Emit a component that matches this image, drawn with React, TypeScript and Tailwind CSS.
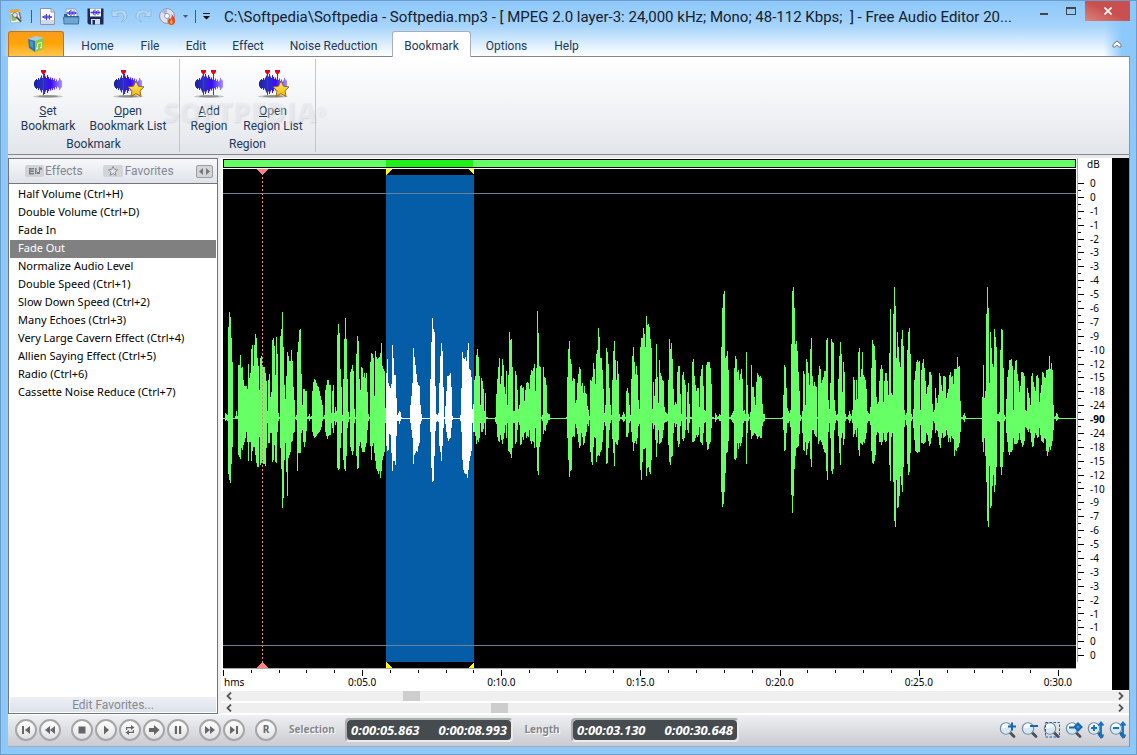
import React from 'react';
import clsx from 'clsx';

interface WaveSegment {
  x: number;
  // alternating amplitude above / below the zero line, one pair per column
  amp: number[];
}

const WIDTH = 853;
const HEIGHT = 499;
const ZERO = 249;
const DURATION = 30.648;
const SEL_START = 163;
const SEL_END = 251;

const WAVE: WaveSegment[] = [
  { x: 2, amp: [5,3, 4,2, 3,3, 91,56, 106,62, 101,65, 80,46, 56,29] },
  { x: 12, amp: [2,1, 7,1, 2,1, 53,37, 53,39, 63,41, 50,30, 51,32, 38,27, 32,24, 32,20, 32,14, 29,24, 54,43, 40,24, 45,24, 69,43, 73,33, 52,29, 73,29, 84,37, 80,45, 60,49, 52,49, 28,19, 60,47, 62,45, 51,42, 51,46, 51,46, 45,48, 37,30, 7,5, 38,25, 44,25, 21,15, 26,15, 78,44, 80,42, 72,27, 43,44, 81,45, 64,14, 5,3, 1,1, 82,30, 89,51, 106,90, 71,80, 33,42, 19,25, 42,54, 66,78, 62,40, 57,37, 57,34, 68,24, 57,23, 31,15, 18,14, 1,1, 3,2, 66,53, 76,35, 88,35, 89,35, 44,15, 13,12, 29,24, 29,29, 27,24, 27,13] },
  { x: 84, amp: [1,1, 2,1, 4,3, 1,1, 2,1, 27,14, 36,18, 39,20, 38,19, 35,18, 32,16, 31,15, 27,14, 22,12, 18,9, 13,3, 1,1] },
  { x: 101, amp: [3,1, 28,14, 33,18, 38,21, 38,18, 33,17, 33,17, 5,5, 27,10, 33,15, 5,3, 11,7, 7,4, 83,50, 94,52, 85,51, 49,30, 31,15, 3,3, 39,42, 79,51, 100,53, 79,38, 39,10, 6,4, 1,1, 46,29, 49,33, 53,37, 47,33, 9,5, 1,1, 64,38, 82,51, 77,50, 39,28, 28,24, 51,30, 50,34, 41,34, 45,34, 40,29, 45,25, 26,12, 4,3, 1,1, 56,28, 65,42, 64,28, 60,25, 22,35, 67,43, 61,51, 59,53, 60,56, 61,53, 65,60, 75,53, 52,42, 49,38, 47,34, 10,5] },
  { x: 163, amp: [45,28, 59,33, 35,32, 32,16, 30,17, 34,35, 73,53, 60,43, 43,43, 43,47, 20,18, 3,3, 5,3, 7,6, 6,3, 1,1] },
  { x: 187, amp: [13,5, 22,12, 35,20, 70,46, 61,37, 53,35, 44,33, 36,34, 33,28, 32,25, 13,6, 4,3] },
  { x: 207, amp: [39,14, 76,50, 100,64, 89,63, 86,38, 32,13, 4,4, 3,3, 5,4, 35,28, 62,34, 75,43, 67,28, 31,10, 1,1, 12,6, 27,14, 42,20, 42,23, 43,21, 45,20, 31,10, 2,2] },
  { x: 237, amp: [3,3, 30,14, 66,42, 60,52, 59,55, 61,56, 57,56, 68,60, 75,52, 49,43, 48,38, 41,33, 9,5, 14,14, 38,14, 42,18, 63,26, 69,22, 61,24, 42,20, 13,5, 40,14, 37,14, 29,11, 7,5, 25,17, 1,1, 1,1] },
  { x: 272, amp: [1,4, 24,6, 39,19, 51,23, 60,24, 34,17, 42,22, 59,26, 53,21, 31,15, 24,7, 47,20, 13,5, 43,33, 86,34, 78,36, 79,40, 51,30, 7,5, 7,5, 47,26, 43,24, 28,12, 9,4, 13,7, 32,27, 33,26, 30,19, 31,22, 17,15, 28,14, 35,20, 36,18, 35,19, 29,12, 43,23, 48,26, 47,23, 50,24, 54,30, 27,10, 50,29, 107,53, 85,57, 52,29, 51,24, 1,1, 3,3, 51,16, 41,12, 40,13, 33,7, 5,5, 4,2, 4,2] },
  { x: 343, amp: [1,1, 41,20, 69,42, 77,59, 59,53, 54,52, 37,19, 40,18, 39,19, 15,6, 18,10, 35,16, 44,24, 51,30, 49,28, 32,15, 35,19, 25,27, 32,25, 25,18, 24,14, 12,6, 8,8, 2,2, 38,34, 37,44, 41,47, 55,29, 49,19, 34,20, 64,44, 68,38, 90,37, 81,38, 60,34, 60,32, 48,24, 29,12, 5,4, 13,8, 70,46, 66,45, 54,30, 30,12, 13,5, 3,2, 38,21, 67,35, 77,48, 58,24, 38,26, 57,27, 44,22, 4,3, 1,1, 1,1, 3,2, 6,4, 4,3, 1,1, 27,19, 30,19, 25,15, 13,5, 3,3, 39,14, 62,24, 71,33, 56,25, 44,23, 52,26, 43,20, 18,8, 9,6, 71,52, 80,62, 80,44, 90,31, 84,31, 71,30, 102,58, 93,50, 94,49, 91,54, 79,56, 70,42, 9,5, 36,11, 22,7, 39,22, 74,39, 41,25, 15,12, 58,26, 45,25, 42,24, 38,20, 37,12, 11,5, 6,4, 5,4, 4,3, 38,27, 79,44, 69,47, 75,39, 59,38, 29,15, 13,5, 16,9, 14,6, 46,23, 52,29, 52,26, 24,8, 4,3, 43,21, 46,23, 38,20, 33,12, 1,1, 26,12, 35,15, 14,5, 1,1, 1,1, 56,24, 59,24, 42,23, 33,20, 27,17, 30,19, 30,17, 11,9, 42,24, 49,25, 53,27, 32,15, 8,5, 7,4, 53,24, 56,32, 56,31, 56,26, 50,24, 34,10, 1,1, 1,1] },
  { x: 492, amp: [5,4, 3,2, 1,1, 2,1, 4,3, 3,3, 71,74, 110,89, 124,86, 127,74, 60,55, 62,35, 67,34, 48,23, 1,1, 1,1, 3,2, 5,4, 7,5, 50,41, 62,42, 59,40, 46,25, 48,31, 38,25, 44,28, 49,25, 39,19, 7,5, 8,3, 4,3, 66,46, 33,15, 4,3, 1,1, 6,12, 53,21, 31,18, 31,17, 21,15, 13,16, 36,18, 45,21, 43,19, 41,18, 42,20, 40,20, 14,8, 4,4, 4,3] },
  { x: 559, amp: [1,1, 23,12, 53,33, 51,32, 30,15, 10,5, 7,5, 5,3, 8,9, 74,77, 127,95, 131,78, 110,51, 74,38, 77,30, 67,29, 46,28, 27,16, 3,3, 1,1, 7,15, 47,32, 44,33, 13,24, 59,37, 56,31, 45,25, 33,23, 69,41, 80,49, 42,12, 32,12, 36,16, 32,18, 31,19, 1,1, 43,26, 52,23, 49,22, 35,24, 38,27, 41,31, 47,34, 47,35, 78,53, 80,62, 18,14, 9,5, 35,20, 79,53, 76,56, 75,51, 18,12, 7,5, 3,2, 4,3, 39,18, 62,35, 76,47, 64,20, 26,15, 56,27, 46,21, 4,3, 1,1, 1,1, 3,2, 7,5, 4,3, 2,1, 8,5, 41,19, 38,16, 18,12, 38,19, 19,10, 66,32, 70,38, 41,25, 49,26, 66,27, 43,24, 41,25, 38,21, 29,15, 7,5, 5,3, 4,3, 11,7, 50,33, 78,45, 74,46, 72,43, 58,37, 21,17, 14,14, 16,15, 37,24, 49,24, 53,27, 49,24, 16,15, 37,22, 45,24, 45,23, 37,15, 23,14, 65,47, 109,63, 25,19, 23,15, 104,64, 131,103, 112,109, 60,62, 86,90, 71,89, 56,78, 51,58, 79,67, 88,74, 72,49, 8,9, 3,2, 5,7, 68,46, 86,57, 90,54, 64,35, 4,3, 1,1, 9,10, 38,22, 47,33, 56,34, 58,35, 56,34, 57,34, 8,7, 48,25, 55,25, 59,26, 50,25, 37,24, 24,15, 31,17, 33,23, 46,28, 46,26, 43,20, 14,12, 6,3, 8,5, 30,15, 20,12, 15,13, 23,19, 45,27, 42,30, 33,20, 27,15, 42,20, 42,19, 41,18, 20,12, 25,17, 29,24, 43,20, 46,24, 41,18, 42,20, 34,21, 49,38, 49,32, 49,33, 61,30, 51,29, 52,25, 17,14, 1,1, 1,1, 3,2, 5,4, 2,1] },
  { x: 759, amp: [21,24, 53,34, 20,20, 27,38, 104,64, 131,103, 110,109, 35,48, 86,90, 70,88, 54,68, 51,57, 89,74, 81,67, 71,49, 4,3, 4,3, 6,4, 68,49, 89,57, 88,49, 50,34, 3,3, 1,1, 19,15, 41,24, 48,34, 58,37, 58,34, 59,34, 52,32, 8,20, 48,26, 57,26, 58,26, 44,25, 37,22, 26,15, 32,22, 46,25, 46,29, 45,27, 42,23, 8,9, 7,10, 30,12, 25,14, 20,11, 13,15, 42,24, 45,29, 36,28, 31,20, 27,15, 42,17, 43,20, 40,19, 16,10, 25,17, 33,23, 46,24, 45,25, 41,20, 40,21, 48,33, 48,38, 49,34, 62,29, 49,32, 55,28, 48,23, 13,12, 1,1, 2,1, 5,3, 4,2, 1,1] },
];

const wavePath = (from: number, to: number) => {
  let d = '';
  WAVE.forEach(seg => {
    for (let i = 0; i < seg.amp.length; i += 2) {
      const x = seg.x + i / 2;
      if (x < from || x >= to) continue;
      d += `M${x} ${ZERO - seg.amp[i]}h1V${ZERO + seg.amp[i + 1]}h-1z`;
    }
  });
  return d;
};

const TABS = [
  { label: 'Home', width: 'w-[57px]' },
  { label: 'File', width: 'w-[42px]' },
  { label: 'Edit', width: 'w-[44px]' },
  { label: 'Effect', width: 'w-[54px]' },
  { label: 'Noise Reduction', width: 'w-[111px]' },
  { label: 'Bookmark', width: 'w-[79px]', active: true },
  { label: 'Options', width: 'w-[65px]' },
  { label: 'Help', width: 'w-[49px]' },
];

const FAVORITES = [
  'Half Volume (Ctrl+H)',
  'Double Volume (Ctrl+D)',
  'Fade In',
  'Fade Out',
  'Normalize Audio Level',
  'Double Speed (Ctrl+1)',
  'Slow Down Speed (Ctrl+2)',
  'Many Echoes (Ctrl+3)',
  'Very Large Cavern Effect (Ctrl+4)',
  'Allien Saying Effect (Ctrl+5)',
  'Radio (Ctrl+6)',
  'Cassette Noise Reduce (Ctrl+7)',
];

const DB_HALF = ['0', '0', '-1', '-1', '-2', '-3', '-3', '-4', '-5', '-6', '-7', '-9', '-10', '-12', '-15', '-18', '-24'];
const DB_LABELS = [...DB_HALF, '-90', ...[...DB_HALF].reverse()];

const TIMES = [
  { at: 5, label: '0:05.0' },
  { at: 10, label: '0:10.0' },
  { at: 15, label: '0:15.0' },
  { at: 20, label: '0:20.0' },
  { at: 25, label: '0:25.0' },
  { at: 30, label: '0:30.0' },
];

/* ---------- icons ---------- */

const MiniWave = ({ x, y }: { x: number; y: number }) => (
  <path
    transform={`translate(${x} ${y})`}
    d="M0 3h10M1.5 2v2M3 1v4M4.5 0v6M6 1.5v3M7.5 .5v5M9 2v2"
    stroke="#4a3fe0"
    strokeWidth="1.1"
    fill="none"
  />
);

const AppIcon = () => (
  <svg width="16" height="16" viewBox="0 0 16 16">
    <path d="M2 3l10-1 1 12-10 1z" fill="#f4f6ee" stroke="#9aa38c" strokeWidth=".6" />
    <path d="M2 2l9-1 .3 3-9 1z" fill="#e8a33a" />
    <path d="M3 6l5-.5.6 7-5 .5z" fill="#8fc060" />
    <path d="M8 8.500l5 5" stroke="#4f5964" strokeWidth="2" />
    <circle cx="7" cy="7" r="2.4" fill="#dfe9f2" stroke="#5c6b7a" strokeWidth=".8" />
    <path d="M11 4l2 7" stroke="#6b7681" strokeWidth="1.5" />
  </svg>
);

const NewIcon = () => (
  <svg width="17" height="17" viewBox="0 0 17 17">
    <path d="M1.500 .5h10.500l3.500 3V16.500h-14z" fill="#fdfdff" stroke="#8a93ae" />
    <path d="M12 .5v3.500h3.500" fill="#d8deee" stroke="#8a93ae" />
    <path d="M2 12h13v4H2z" fill="#d3d9ec" />
    <MiniWave x={3} y={6} />
  </svg>
);

const OpenIcon = () => (
  <svg width="17" height="17" viewBox="0 0 17 17">
    <path d="M3 1h9l2 2v7H3z" fill="#f6f7ff" stroke="#8490b4" strokeWidth=".8" />
    <MiniWave x={3.500} y={2} />
    <path d="M1 6h3l1 2h11l-.5 8h-14z" fill="#2d608f" />
    <path d="M.5 9h15.500l-.6 7H1z" fill="#6fa5d0" stroke="#2f6797" strokeWidth=".8" />
  </svg>
);

const SaveIcon = () => (
  <svg width="17" height="17" viewBox="0 0 17 17">
    <path d="M.5 .5h16v16H2L.5 15z" fill="#1c2c59" />
    <path d="M3 .5h11v8H3z" fill="#f4f5ff" />
    <MiniWave x={3.500} y={1.500} />
    <path d="M4 11h9v5.500H4z" fill="#d4dbe8" />
    <path d="M5.500 12h2.500v4.500H5.500z" fill="#1c2c59" />
  </svg>
);

const UndoIcon = ({ flip = false }: { flip?: boolean }) => (
  <svg width="17" height="16" viewBox="0 0 17 16" className={flip ? '-scale-x-100' : ''}>
    <path d="M1 1.500v7h7L5.500 6C9 3.500 13 5 13 9c0 2-1 3.500-3 5 4-1 6-3 6-6 0-5.500-7-8-12.500-4z" fill="#b5d8f3" stroke="#8bb4d6" strokeWidth=".8" />
  </svg>
);

const BurnIcon = () => (
  <svg width="17" height="17" viewBox="0 0 17 17">
    <circle cx="8" cy="8" r="7.400" fill="#dfe3ef" stroke="#8389a0" strokeWidth=".8" />
    <path d="M8 8L2 3.500A7 7 0 0 1 8 .9zM8 8l6 4.500A7 7 0 0 1 8 15z" fill="#aab4d6" />
    <circle cx="8" cy="8" r="2.500" fill="#fff" stroke="#7f88a6" strokeWidth=".8" />
    <path d="M12.500 6c2.500 2.500 4 5 3.500 8-.4 2-2 3-3.700 3S9 15.500 9 13.500c0-1.500 1-2.500 1.500-3.500l1 1.200C12.600 9.500 13 8 12.500 6z" fill="#e8481c" />
    <path d="M12.500 11c1.400 1.500 1.700 4.500 0 5-1.700-.5-1.700-2.500-.8-3.500z" fill="#fbb13c" />
  </svg>
);

const CubeIcon = () => (
  <svg width="18" height="18" viewBox="0 0 18 18">
    <path d="M1 4l8-3 8 2-8 3z" fill="#9fd0f2" />
    <path d="M1 4l7 2v11l-6-4z" fill="#2c77b8" />
    <path d="M8 6l9-3-1 11-8 3z" fill="#8dc63f" />
    <path d="M3 6l3 1v6l-3-2z" fill="#4f94c9" />
    <path d="M10.500 13.500V8.500l4-1.200V12.500" stroke="#e9f7d5" strokeWidth=".9" fill="none" />
    <circle cx="10" cy="13.500" r="1" fill="#e9f7d5" />
    <circle cx="14" cy="12.500" r="1" fill="#e9f7d5" />
  </svg>
);

interface RibbonIconProps {
  id: string;
  marks: number[];
  star?: boolean;
}

const BARS = [5, 8, 10, 8, 12, 9, 13, 17, 12, 15, 20, 15, 12, 18, 14, 10, 13, 9, 12, 8, 11, 6, 9, 5, 7, 12, 9, 7];

const RibbonIcon = ({ id, marks, star }: RibbonIconProps) => (
  <svg width="32" height="32" viewBox="0 0 32 32">
    <defs>
      <linearGradient id={id} x1="0" x2="1">
        <stop offset="0" stopColor="#1b1f9c" />
        <stop offset=".3" stopColor="#2c2fc4" />
        <stop offset=".6" stopColor="#3a0cf5" />
        <stop offset="1" stopColor="#a993ff" />
      </linearGradient>
      <linearGradient id={`${id}-star`} x1="0" y1="0" x2="0" y2="1">
        <stop offset="0" stopColor="#ffec80" />
        <stop offset="1" stopColor="#f2b400" />
      </linearGradient>
    </defs>
    <ellipse cx="16" cy="28.500" rx="15" ry="1.500" fill="#c4c4c4" />
    <ellipse cx="16" cy="28.300" rx="10" ry="1" fill="#8b8b8b" />
    <path d={BARS.map((h, i) => `M${2 + i} ${16 - h / 2}h1.1v${h}h-1.1z`).join('')} fill={`url(#${id})`} />
    {marks.map(x => (
      <path key={x} d={`M${x - 2} 2h5v2l-2 2.500v20.500h-1V6.500l-2-2.500z`} fill="#e3001b" />
    ))}
    {star && (
      <path
        d="M24 13l2.500 5.200 5.500.7-4 3.900 1 5.700-5-2.800-5 2.800 1-5.700-4-3.900 5.500-.7z"
        fill={`url(#${id}-star)`}
        stroke="#8a6310"
        strokeWidth=".9"
      />
    )}
  </svg>
);

const Glass = ({ children }: { children?: React.ReactNode }) => (
  <svg width="18" height="18" viewBox="0 0 18 18">
    <path d="M11 11.500l4 4" stroke="#4a4f55" strokeWidth="2.800" strokeLinecap="round" />
    <circle cx="7" cy="7.500" r="5.700" fill="#d7e7f2" stroke="#6c8ca5" strokeWidth="1.100" />
    <path d="M3 7a4 4 0 0 1 8-1c-3 0-5 2-8 1z" fill="#f7fbfe" />
    {children}
  </svg>
);

const ZOOMS = [
  { label: 'Zoom In', mark: <path d="M9 5.500h8M13 1.500v8" stroke="#1467b3" strokeWidth="2" /> },
  { label: 'Zoom Out', mark: <path d="M9 5h8" stroke="#1467b3" strokeWidth="2" /> },
  { label: 'Zoom to Selection', mark: <path d="M2.500 1.500h14v14.500h-14z" fill="none" stroke="#1f5fae" strokeWidth="1" strokeDasharray="2.500 1.500" /> },
  { label: 'Zoom Full', mark: <path d="M4 6.500h5M9.500 6l3.500-3.500L16.500 6 13 9.500z" stroke="#1467b3" strokeWidth="2" fill="#3a8fd8" /> },
  { label: 'Zoom In Vertically', mark: <path d="M4 7h6M7 4v6M14 3v12M11.500 4.500L14 1.500l2.500 3M11.500 13.500l2.500 3 2.500-3" stroke="#1272c4" strokeWidth="1.900" fill="none" /> },
  { label: 'Zoom Out Vertically', mark: <path d="M4 7h6M14 3v12M11.500 4.500L14 1.500l2.500 3M11.500 13.500l2.500 3 2.500-3" stroke="#1272c4" strokeWidth="1.900" fill="none" /> },
];

const TRANSPORT = [
  { label: 'Go to start', d: 'M6 6h2v8H6zM14 6v8l-5-4z' },
  { label: 'Rewind', d: 'M10 6v8l-5-4zM15 6v8l-5-4z' },
  { label: 'Stop', d: 'M6.500 6.500h7v7h-7z', gap: true },
  { label: 'Play', d: 'M8 5.500l5 4.500-5 4.500z' },
  { label: 'Loop', d: 'M6 10V7h5V5l3.500 2.500L11 10V8.200H7.200V10zM14 10v3H9v2l-3.500-2.500L9 10v1.800h3.800V10z' },
  { label: 'Play to end', d: 'M5 8h5V5l5.500 5-5.500 5v-3H5z' },
  { label: 'Pause', d: 'M6.800 6h2.200v8H6.800zM11 6h2.200v8H11z' },
  { label: 'Forward', d: 'M5 6v8l5-4zM10 6v8l5-4z', gap: true },
  { label: 'Go to end', d: 'M6 6v8l5-4zM12 6h2v8h-2z' },
];

/* ---------- parts ---------- */

const RoundButton = ({ label, gap, children }: { label: string; gap?: boolean; children: React.ReactNode }) => (
  <button
    aria-label={label}
    className={clsx(
      'flex h-[22px] w-[22px] items-center justify-center rounded-full border-2 border-[#a6a6a6] bg-gradient-to-b from-white to-[#e2e2e4] text-[#666]',
      gap && 'ml-[8px]'
    )}
  >
    {children}
  </button>
);

const RibbonButton = ({ first, second, width, children }: { first: string; second: string; width: string; children: React.ReactNode }) => (
  <button className={clsx('flex flex-col items-center whitespace-nowrap leading-[15px]', width)}>
    {children}
    <span className="mt-[4px]">
      <u>{first[0]}</u>
      {first.slice(1)}
    </span>
    <span>{second}</span>
  </button>
);

const Readout = ({ from, to }: { from: string; to: string }) => (
  <div className="rounded-sm border-2 border-t-[#adadad] border-r-[#e9e9eb] border-b-[#ececee] border-l-[#adadad]">
    <div className="flex h-[20px] w-[164px] items-center justify-between rounded-sm bg-[#464b50] px-1 font-['Noto_Sans',sans-serif] text-[13px] leading-[20px] font-bold text-white italic">
      <output>{from}</output>
      <output>{to}</output>
    </div>
  </div>
);

const ScrollTrack = ({ name, thumb }: { name: string; thumb: string }) => (
  <div className="flex h-[10px] items-center bg-[#efefef]">
    <button aria-label={`${name} left`} className="flex h-full w-[16px] items-center justify-center">
      <svg width="6" height="8" viewBox="0 0 6 8"><path d="M5 .5L1.500 4 5 7.500" fill="none" stroke="#555" strokeWidth="1.800" /></svg>
    </button>
    <div className="flex h-full flex-1">
      <div className={thumb} />
      <div className="w-[17px] bg-[#cdcdcd]" />
    </div>
    <button aria-label={`${name} right`} className="flex h-full w-[16px] items-center justify-center">
      <svg width="6" height="8" viewBox="0 0 6 8"><path d="M1 .5L4.500 4 1 7.500" fill="none" stroke="#555" strokeWidth="1.800" /></svg>
    </button>
  </div>
);

const TitleBar = () => (
  <div className="flex h-[30px] items-start">
    <div className="flex h-full w-[216px] items-center gap-[7px]">
      <AppIcon />
      <span className="h-[13px] w-px bg-[#4a5a6c]" />
      <button aria-label="New"><NewIcon /></button>
      <button aria-label="Open"><OpenIcon /></button>
      <button aria-label="Save"><SaveIcon /></button>
      <button aria-label="Undo"><UndoIcon /></button>
      <button aria-label="Redo"><UndoIcon flip /></button>
      <button aria-label="Burn CD"><BurnIcon /></button>
      <button aria-label="Burn options">
        <svg width="5" height="3" viewBox="0 0 5 3"><path d="M0 0h5L2.500 3z" fill="#555" /></svg>
      </button>
      <span className="h-[13px] w-px bg-[#4a5a6c]" />
      <button aria-label="Customize toolbar">
        <svg width="7" height="7" viewBox="0 0 7 7"><path d="M0 0h7v1H0zM0 3h7L3.500 6.500z" fill="#111" /></svg>
      </button>
    </div>
    <h1 className="h-full flex-1 overflow-hidden text-[15px] leading-[32px] whitespace-pre text-[#15202b]">
      {'C:\\Softpedia\\Softpedia - Softpedia.mp3 - [ MPEG 2.0 layer-3: 24,000 kHz; Mono; 48-112 Kbps;  ] - Free Audio Editor 20...'}
    </h1>
    <button aria-label="Minimize" className="flex h-[20px] w-[27px] items-center justify-center">
      <span className="mt-[6px] h-[2px] w-[8px] bg-[#444]" />
    </button>
    <button aria-label="Maximize" className="flex h-[20px] w-[27px] items-center justify-center">
      <span className="h-[8px] w-[10px] border border-t-2 border-[#444]" />
    </button>
    <button aria-label="Close" className="ml-[1px] flex h-[20px] w-[45px] items-center justify-center bg-gradient-to-tr from-[#da8480] via-[#c9504e] to-[#c84f50]">
      <svg width="8" height="8" viewBox="0 0 8 8"><path d="M.5 .5l7 7M7.500 .5l-7 7" stroke="#fff" strokeWidth="1.700" /></svg>
    </button>
  </div>
);

const Ribbon = () => (
  <div className="relative flex h-[98px] border-b border-[#85878f] bg-gradient-to-b from-white via-[#f3f4f7] to-[#e2e5ea] py-[2px] text-[12px] text-[#1e395b]">
    <section className="flex w-[172px] flex-col border-r border-[#c3c6cd]">
      <div className="flex pt-[9px] pl-[3px]">
        <RibbonButton first="Set" second="Bookmark" width="w-[74px]"><RibbonIcon id="rb-set" marks={[11]} /></RibbonButton>
        <RibbonButton first="Open" second="Bookmark List" width="w-[86px]"><RibbonIcon id="rb-list" marks={[11]} star /></RibbonButton>
      </div>
      <h2 className="mt-[3px] text-center leading-[15px]">Bookmark</h2>
    </section>
    <section className="flex w-[136px] flex-col border-r border-[#c3c6cd]">
      <div className="flex pt-[9px] pl-[2px]">
        <RibbonButton first="Add" second="Region" width="w-[54px]"><RibbonIcon id="rg-add" marks={[10, 20]} /></RibbonButton>
        <RibbonButton first="Open" second="Region List" width="w-[74px]"><RibbonIcon id="rg-list" marks={[10, 20]} star /></RibbonButton>
      </div>
      <h2 className="mt-[3px] text-center leading-[15px]">Region</h2>
    </section>
    <span className="pointer-events-none absolute top-[36px] left-[154px] font-['Open_Sans',sans-serif] text-[28px] leading-[36px] font-extrabold text-white/40 [text-shadow:1px_1px_2px_rgba(120,125,135,0.2)]">
      SOFTPEDIA<sup className="text-[12px] font-normal">®</sup>
    </span>
  </div>
);

const FavoritesPanel = () => (
  <aside className="flex w-[210px] flex-col border border-[#73757c] bg-white">
    <div className="flex h-[25px] items-center border-b border-[#73757c] bg-gradient-to-b from-[#f7f8fa] to-[#dfe3e9] pr-[4px] pl-[16px] text-[12px] text-[#85888f]">
      <button className="flex items-center gap-px">
        <svg width="19" height="12" viewBox="0 0 19 12">
          <rect width="19" height="12" rx="2" fill="#d0d2d5" />
          <path d="M4 3h5v1.500H5.500v1H9V7H5.500v1H9v1.500H4zM10 3h1.500v6H10zM14 2l3 1v2l-2-.6V9h-3V7h2z" fill="#7b7e83" />
        </svg>
        Effects
      </button>
      <button className="ml-[20px] flex items-center gap-[2px]">
        <svg width="20" height="12" viewBox="0 0 20 12">
          <rect width="20" height="12" rx="2" fill="#d3d6d9" />
          <path d="M10 1.500l1.400 3 3.200.3-2.400 2.200.7 3.300L10 8.600l-2.900 1.700.7-3.300-2.400-2.200 3.200-.3z" fill="#e4e6e8" stroke="#8b8e93" />
        </svg>
        Favorites
      </button>
      <button aria-label="Scroll tabs" className="ml-auto flex h-[13px] w-[17px] items-center justify-center rounded-xs border border-[#9b9da1] bg-[#d3d5d8]">
        <svg width="11" height="7" viewBox="0 0 11 7"><path d="M4 0v7L0 3.500zM7 0v7l4-3.500z" fill="#77797d" /></svg>
      </button>
    </div>
    <ul className="flex-1 px-px pt-[2px] font-['Noto_Sans',sans-serif] text-[11px]">
      {FAVORITES.map(name => (
        <li key={name}>
          <button
            className={clsx(
              'flex h-[18px] w-full items-start pl-[8px] leading-[16px] whitespace-nowrap',
              name === 'Fade Out' ? 'bg-[#808080] text-white' : 'text-black'
            )}
          >
            {name}
          </button>
        </li>
      ))}
    </ul>
    <button className="m-px h-[15px] bg-gradient-to-b from-[#eceff4] to-[#dde2eb] text-[12px] leading-[14px] text-[#85888f]">
      Edit Favorites...
    </button>
  </aside>
);

const WaveView = () => (
  <svg
    className="min-h-0 w-full flex-1 bg-black"
    viewBox={`0 0 ${WIDTH} ${HEIGHT}`}
    preserveAspectRatio="none"
    shapeRendering="crispEdges"
    role="img"
    aria-label="Waveform"
  >
    <rect x={SEL_START} y="6" width={SEL_END - SEL_START} height="487" fill="#045da6" />
    <path d="M0 24h853v1H0zM0 476h853v1H0z" fill="#6b8094" />
    <path d={`M0 ${ZERO}h163v1H0zM251 ${ZERO}h602v1H251z`} fill="#66ff66" />
    <path d={`M163 ${ZERO}h88v1h-88z`} fill="#fff" />
    <path d={wavePath(0, SEL_START) + wavePath(SEL_END, WIDTH)} fill="#66ff66" />
    <path d={wavePath(SEL_START, SEL_END)} fill="#fff" />
    <path d="M163 0h6l-6 6zM251 0h-6l6 6zM163 499h6l-6-6zM251 499h-6l6-6z" fill="#ffff00" />
    <path d="M39.500 0v499" stroke="#ff8080" strokeDasharray="2 2" />
    <path d="M34 0h11l-5.500 6zM34 499h11l-5.500-6z" fill="#ff8080" />
  </svg>
);

const TimeRuler = () => {
  const ticks = Array.from({ length: 31 }, (_, s) => {
    const x = Math.round((s / DURATION) * WIDTH);
    return `M${x} 1h1v${s % 5 === 0 ? 6 : 3}h-1z`;
  }).join('');
  return (
    <div className="relative h-[22px] border-t border-[#a8a8a8] bg-white font-['Noto_Sans',sans-serif] text-[10px] leading-[12px] text-black">
      <svg className="block h-[7px] w-full" viewBox={`0 0 ${WIDTH} 7`} preserveAspectRatio="none" shapeRendering="crispEdges">
        <path d={ticks} fill="#000" />
      </svg>
      <span className="absolute top-[7px] left-px">hms</span>
      {TIMES.map(t => (
        <span key={t.at} className="absolute top-[7px] -translate-x-1/2" style={{ left: `${(t.at / DURATION) * 100}%` }}>
          {t.label}
        </span>
      ))}
    </div>
  );
};

const DbScale = () => {
  const ticks = DB_LABELS.map((_, i) => `M0 ${Math.round(7 + i * 13.886)}h6v1H0z` + (i < 34 ? `M0 ${Math.round(14 + i * 13.886)}h3v1H0z` : '')).join('');
  return (
    <div className="flex w-[35px] flex-col bg-white font-['Noto_Sans',sans-serif] text-[10px] text-black">
      <div className="h-[18px] border-l border-[#a8a8a8] pl-[9px] leading-[12px]">dB</div>
      <div className="flex min-h-0 flex-1 border-l border-[#a8a8a8]">
        <svg className="h-full w-[6px]" viewBox="0 0 6 486" preserveAspectRatio="none" shapeRendering="crispEdges">
          <path d={ticks} fill="#000" />
        </svg>
        <div className="flex flex-1 flex-col pl-[6px]">
          {DB_LABELS.map((db, i) => (
            <span key={i} className={clsx('flex min-h-0 flex-1 items-center leading-none', db === '-90' && 'font-bold')}>
              {db}
            </span>
          ))}
        </div>
      </div>
      <div className="h-[28px]" />
    </div>
  );
};

export default function App() {
  return (
    <div className="flex h-screen flex-col border border-[#6e9cc9] bg-[#8cc8fa] font-['Roboto',sans-serif]">
      <header className="bg-[linear-gradient(to_right,#8cc8fa,transparent_24px,transparent_calc(100%-32px),#8cc8fa_calc(100%-14px)),linear-gradient(to_bottom,#8cc8fa,#a5d3fb_45%,#fff)] pr-[6px] pl-[7px]">
        <TitleBar />
        <nav className="flex h-[25px] items-end text-[12px] text-[#1e395b]">
          <button aria-label="Application menu" className="mr-[5px] flex h-full w-[56px] items-center justify-center rounded-t-[3px] border border-b-0 border-[#c9730a] bg-gradient-to-b from-[#f89c1c] via-[#ffa500] to-[#ffc64a]">
            <CubeIcon />
          </button>
          <div className="flex h-full flex-1 gap-[3px]">
            {TABS.map(tab => (
              <button
                key={tab.label}
                className={clsx(
                  'text-center whitespace-nowrap',
                  tab.width,
                  tab.active ? 'relative z-10 h-[26px] rounded-t-[3px] border border-b-0 border-[#a9adb5] bg-white pt-[2px]' : 'h-full pt-[4px]'
                )}
              >
                {tab.label}
              </button>
            ))}
          </div>
          <button aria-label="Collapse ribbon" className="mr-[8px] self-center">
            <svg width="10" height="8" viewBox="0 0 10 8"><path d="M1 4.500L5 1l4 3.500V7H7.200L5 5 2.800 7H1z" fill="#fff" stroke="#777" /></svg>
          </button>
        </nav>
      </header>

      <div className="mr-[6px] mb-[7px] ml-[7px] flex min-h-0 flex-1 flex-col border-t border-r border-t-[#85858f] border-r-[#6e9cc9] bg-[#e6e8ec]">
        <Ribbon />
        <main className="mt-[3px] flex min-h-0 flex-1 bg-[#f0f0f0]">
          <FavoritesPanel />
          <div className="ml-[3px] flex min-w-0 flex-1 flex-col bg-white">
            <div className="flex min-h-0 flex-1">
              <div className="flex min-w-0 flex-1 flex-col pt-px pr-px pl-[2px]">
                <div className="mb-px flex h-[9px] border border-black bg-[#66ff66]">
                  <div className="w-[19%]" />
                  <div className="w-[87px] bg-[#1ff01a]" />
                </div>
                <WaveView />
                <TimeRuler />
              </div>
              <DbScale />
              <div className="w-[17px] bg-black" />
            </div>
            <div className="flex flex-col gap-[2px] pt-px pb-px">
              <ScrollTrack name="Scroll" thumb="w-[19%]" />
              <ScrollTrack name="Zoom" thumb="w-[29%]" />
            </div>
          </div>
        </main>

        <footer className="flex h-[33px] items-center border-t border-b border-t-white border-b-[#a9abb0] bg-gradient-to-b from-[#eff0f3] to-[#c9cbd0] pr-[2px] pb-[2px] pl-[7px] font-['Noto_Sans',sans-serif] text-[10px] font-bold text-[#85878b]">
          <div className="flex gap-[2px]">
            {TRANSPORT.map(t => (
              <RoundButton key={t.label} label={t.label} gap={t.gap}>
                <svg width="20" height="20" viewBox="0 0 20 20" className="shrink-0"><path d={t.d} fill="#666" /></svg>
              </RoundButton>
            ))}
            <RoundButton label="Record" gap>R</RoundButton>
          </div>
          <span className="ml-[12px] w-[56px] [text-shadow:1px_1px_0_#fff]">Selection</span>
          <Readout from="0:00:05.863" to="0:00:08.993" />
          <span className="w-[58px] text-center [text-shadow:1px_1px_0_#fff]">Length</span>
          <Readout from="0:00:03.130" to="0:00:30.648" />
          <div className="ml-auto flex gap-[4px]">
            {ZOOMS.map(z => (
              <button key={z.label} aria-label={z.label}>
                <Glass>{z.mark}</Glass>
              </button>
            ))}
          </div>
        </footer>
      </div>
    </div>
  );
}
